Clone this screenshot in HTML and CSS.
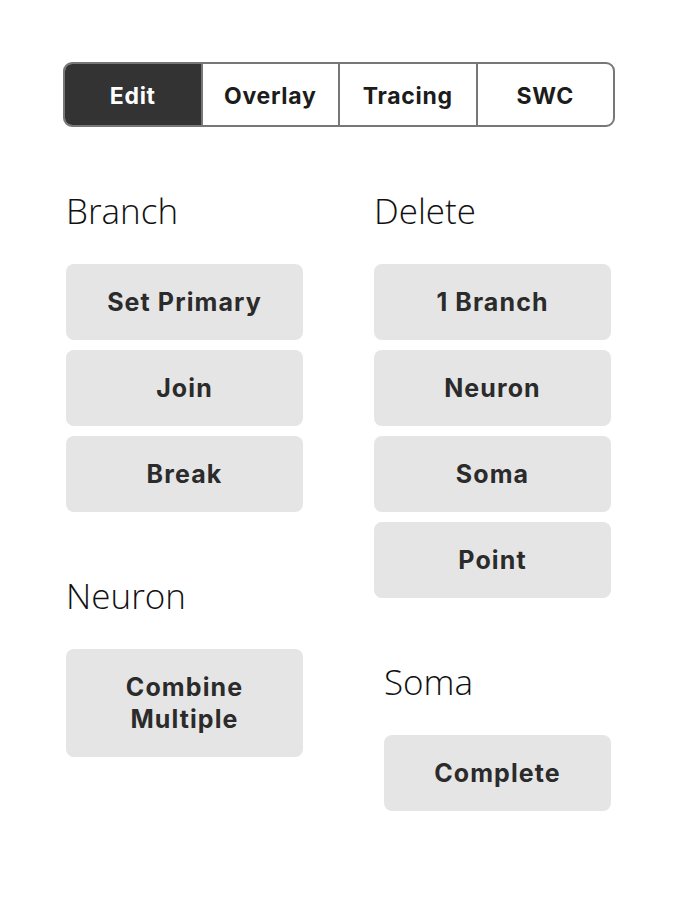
FILE: index.html
```html
<!DOCTYPE html>
<html>
<head>
<meta charset="utf-8">
<link rel="stylesheet" href="styles.css">
</head>
<body>
<div class="panel">
  <div class="tabs">
    <div class="tab active">Edit</div>
    <div class="tab">Overlay</div>
    <div class="tab">Tracing</div>
    <div class="tab">SWC</div>
  </div>
  <div class="columns">
    <div class="col">
      <div class="section">
        <h2 class="heading">Branch</h2>
        <div class="btns">
          <div class="btn">Set Primary</div>
          <div class="btn">Join</div>
          <div class="btn">Break</div>
        </div>
      </div>
      <div class="section">
        <h2 class="heading">Neuron</h2>
        <div class="btns">
          <div class="btn">Combine<br>Multiple</div>
        </div>
      </div>
    </div>
    <div class="col">
      <div class="section">
        <h2 class="heading">Delete</h2>
        <div class="btns">
          <div class="btn">1 Branch</div>
          <div class="btn">Neuron</div>
          <div class="btn">Soma</div>
          <div class="btn">Point</div>
        </div>
      </div>
      <div class="section inset">
        <h2 class="heading">Soma</h2>
        <div class="btns">
          <div class="btn">Complete</div>
        </div>
      </div>
    </div>
  </div>
</div>
</body>
</html>
```
FILE: styles.css
```css
* { box-sizing: border-box; }
html, body { margin: 0; padding: 0; background: #fff; }
body { font-family: Inter, "Liberation Sans", sans-serif; }
.panel { padding: 62px 0 0 63px; width: 615px; }
.tabs {
  display: flex;
  width: 552px;
  height: 65px;
  border: 2px solid #777;
  border-radius: 9px;
  overflow: hidden;
}
.tab {
  flex: 1;
  display: flex;
  align-items: center;
  justify-content: center;
  padding-top: 2px;
  font-size: 23px;
  font-weight: 700;
  color: #1c1c1c;
  border-left: 2px solid #777;
  letter-spacing: 0.7px;
}
.tab:first-child { border-left: none; }
.tab.active { background: #333; color: #fff; }
.columns {
  display: grid;
  grid-template-columns: 237px 237px;
  column-gap: 71px;
  padding-left: 3px;
}
.section { margin-top: 60px; }
.section.inset { padding-left: 10px; }
.heading {
  margin: 0 0 29px 0;
  font-family: "Open Sans", sans-serif;
  font-weight: 300;
  font-size: 35px;
  line-height: 48px;
  color: #111;
}
.btns { display: flex; flex-direction: column; gap: 10px; }
.btn {
  background: #e5e5e5;
  border-radius: 8px;
  padding: 22px 4px;
  min-height: 76px;
  text-align: center;
  font-size: 25px;
  line-height: 32px;
  font-weight: 700;
  color: #2b2b2b;
  letter-spacing: 1.1px;
}
```
